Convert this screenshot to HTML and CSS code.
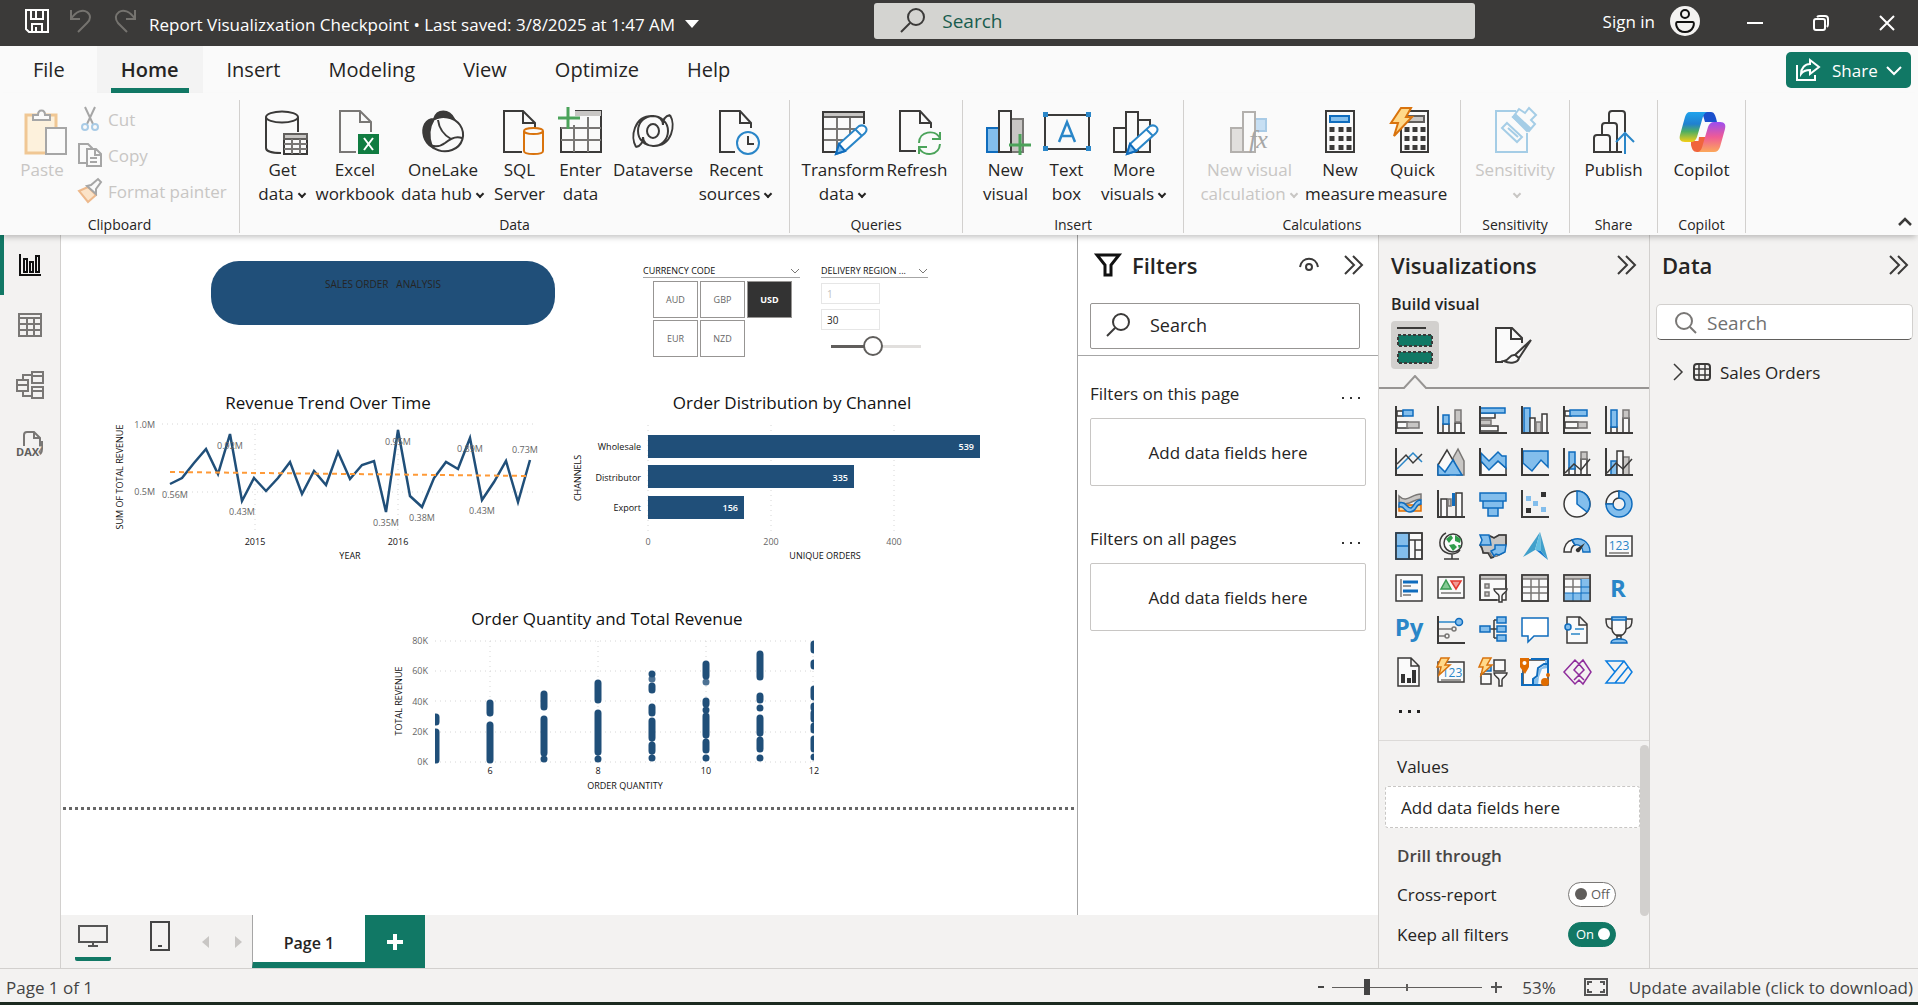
FILE: index.html
```html
<!DOCTYPE html>
<html lang="en">
<head>
<meta charset="utf-8">
<title>Report Visualizxation Checkpoint</title>
<link rel="stylesheet" href="styles.css">
</head>
<body>
<div class="app">

<header class="titlebar">
  <div class="title-left">
    <button class="plain" aria-label="Save"><svg class="ic light" width="24" height="24" viewBox="0 0 24 24"><path d="M1 1h22v22H4l-3-3zM6 1v9h12V1M11 1v9M7 23v-8h10v8M11 18v5"/></svg></button>
    <button class="plain" aria-label="Undo"><svg class="ic dim" width="24" height="24" viewBox="0 0 24 24"><path d="M2 1v9h9M2 10C7 2 14 0 18 3c4 3 4 7 0 11l-9 9"/></svg></button>
    <button class="plain" aria-label="Redo"><svg class="ic dim" width="24" height="24" viewBox="0 0 24 24"><path d="M22 1v9h-9M22 10C17 2 10 0 6 3c-4 3-4 7-1 11l9 9"/></svg></button>
  </div>
  <button class="plain doc-title">Report Visualizxation Checkpoint • Last saved: 3/8/2025 at 1:47 AM<svg width="14" height="8" viewBox="0 0 14 8"><path d="M0 0h14L7 8z" fill="#fff"/></svg></button>
  <label class="global-search">
    <svg class="ic" width="26" height="26" viewBox="0 0 26 26"><circle cx="16" cy="9" r="8"/><path d="M10 15L1 24"/></svg>
    <input type="text" placeholder="Search" aria-label="Search">
  </label>
  <div class="title-right">
    <button class="plain signin">Sign in<svg width="30" height="30" viewBox="0 0 30 30"><circle cx="15" cy="15" r="15" fill="#f3f2f1"/><g fill="none" stroke="#111" stroke-width="2"><circle cx="15" cy="8" r="4"/><path d="M7 16h16c2 0 1 10-8 10S5 16 7 16z"/></g></svg></button>
    <button class="plain" aria-label="Minimize"><svg class="ic light" width="16" height="16" viewBox="0 0 16 16"><path d="M0 8h16"/></svg></button>
    <button class="plain" aria-label="Restore"><svg class="ic light" width="16" height="16" viewBox="0 0 16 16"><rect x="1" y="4" width="11" height="11" rx="2"/><path d="M4 2q1-1 3-1h5q3 0 3 3v5q0 2-1 3"/></svg></button>
    <button class="plain" aria-label="Close"><svg class="ic light" width="16" height="16" viewBox="0 0 16 16"><path d="M1 1l14 14M15 1L1 15"/></svg></button>
  </div>
</header>

<nav class="menubar">
  <a class="menu file" href="#">File</a>
  <a class="menu active" href="#">Home</a>
  <a class="menu" href="#">Insert</a>
  <a class="menu" href="#">Modeling</a>
  <a class="menu" href="#">View</a>
  <a class="menu" href="#">Optimize</a>
  <a class="menu" href="#">Help</a>
  <button class="share"><svg class="ic light" width="24" height="22" viewBox="0 0 24 22"><path d="M1 6v15h18v-5"/><path d="M14 1l9 7-9 7v-4c-4 0-7 1-9 4 0-6 4-10 9-10z"/></svg>Share<svg class="ic light" width="16" height="9" viewBox="0 0 16 9"><path d="M1 1l7 7 7-7"/></svg></button>
</nav>

<section class="ribbon">
  <div class="group clipboard">
    <div class="tools">
      <button class="tool w-paste off" disabled><svg class="ic" width="48" height="48" viewBox="-3 0 48 48"><path class="tan" d="M5 8h30v38H5z"/><path class="fillw" stroke="#a6a6a6" d="M12 13V8h5c0-6 7-6 7 0h5v5z"/><path class="fillw" stroke="#a6a6a6" d="M25 21h20v26H25z"/></svg><span>Paste</span></button>
      <div class="stack">
        <button class="mini" disabled><svg class="ic" width="24" height="24" viewBox="0 0 24 24"><path stroke="#a6a6a6" d="M7 0l8 17M17 0L9 17"/><g stroke="#a9cbe6"><circle cx="7" cy="20" r="3"/><circle cx="17" cy="20" r="3"/></g></svg>Cut</button>
        <button class="mini" disabled><svg class="ic" width="24" height="24" viewBox="0 0 24 24"><path stroke="#a6a6a6" d="M9 20H1V1h9l4 4v1M9 6h9l5 5v12H9zM17 6v6h6M12 15h7M12 19h7"/></svg>Copy</button>
        <button class="mini" disabled><svg class="ic" width="24" height="24" viewBox="0 0 24 24"><path fill="#fbe3c8" stroke="#edb98c" d="M1 12l9-4 8 8-8 7z"/><path class="fillw" stroke="#a6a6a6" d="M9 7l4-1 7-6 3 3-5 7v5z"/></svg>Format painter</button>
      </div>
    </div>
    <h2>Clipboard</h2>
  </div>
  <div class="group">
    <div class="tools pad">
      <button class="tool w61"><svg class="ic" width="48" height="48" viewBox="-1 0 48 48"><path class="fillw" d="M6 9v32c0 4 8 6 15 6V30h18V9z" stroke="none"/><ellipse class="fillw" cx="22" cy="10" rx="16" ry="5.500"/><path d="M6 10v31c0 3 6 5 15 5M38 10v15"/><path class="fillw" d="M24 27h23v20H24z"/><path class="grayf" d="M24 27h23v5H24z"/><path class="gy" d="M24 37h23M24 42h23M32 32v15M40 32v15"/></svg><span>Get<br>data<i></i></span></button>
      <button class="tool w84"><svg class="ic" width="48" height="48" viewBox="-3 0 48 48"><path class="gy fillw" d="M22 45H6V4h20l11 11v10"/><path class="gy" d="M26 4v11h11"/><path d="M24 27h21v20H24z" fill="#107c41" stroke="none"/><path d="M30 31l9 12M39 31l-9 12" stroke="#fff"/></svg><span>Excel<br>workbook</span></button>
      <button class="tool w92"><svg class="ic" width="48" height="48" viewBox="0 0 48 48"><path d="M15 12C10 20 9 30 13 40 5 35 2 25 6 17c2-3 5-5 9-5zM15 12C18 2 30 2 35 12c-7-3-13-3-20 0z" fill="#3b3a39"/><path d="M15 12c9-4 20-2 26 6 6 9 3 21-8 25-8 3-14 1-20-3M8 35c5 6 13 5 18 1 7-6 12-7 17-5M19 13c1 8 6 15 13 19"/></svg><span>OneLake<br>data hub<i></i></span></button>
      <button class="tool w61"><svg class="ic" width="48" height="48" viewBox="0 0 48 48"><path class="fillw" d="M26 45H8V4h19l12 12v5M27 4v12h12"/><path d="M28 24v20c0 4 19 4 19 0V24" stroke="#d9730d" fill="#fafafa"/><ellipse cx="37.500" cy="24" rx="9.500" ry="3" stroke="#d9730d" fill="#fafafa"/></svg><span>SQL<br>Server</span></button>
      <button class="tool w61"><svg class="ic" width="48" height="48" viewBox="0 0 48 48"><path class="fillw" d="M4 20v25h40V4H18"/><path d="M18 4h26v5H18z" fill="#c8c6c4" stroke="none"/><path class="gy" d="M4 21h40M4 33h40M17 18v27M31 10v35"/><path d="M1 11h22M11 0v22" stroke="#4ba35a" stroke-width="3"/></svg><span>Enter<br>data</span></button>
      <button class="tool w84"><svg class="ic" width="48" height="48" viewBox="0 0 48 48"><path d="M7 40C1 30 5 9 23 9c9 0 16 6 16 15s-7 15-15 15c-6 0-10-4-10-9M41 8c6 10 2 31-16 31-9 0-16-6-16-15S16 9 24 9c6 0 10 4 10 9M7 40c5-1 7-5 7-10M41 8c-5 1-7 5-7 10"/><ellipse cx="24" cy="24" rx="6" ry="7"/></svg><span>Dataverse</span></button>
      <button class="tool w82"><svg class="ic" width="48" height="48" viewBox="0 0 48 48"><path class="fillw" d="M23 45H8V4h20l11 12v5M28 4v12h11"/><circle cx="36" cy="36" r="11" stroke="#2a86c8" fill="#fafafa"/><path d="M36 29v8h6"/></svg><span>Recent<br>sources<i></i></span></button>
    </div>
    <h2>Data</h2>
  </div>
  <div class="group">
    <div class="tools pad">
      <button class="tool w82"><svg class="ic" width="48" height="48" viewBox="0 0 48 48"><path class="fillw" d="M4 5h41v40H4z" stroke="none"/><path class="grayf" d="M4 5h41v5H4z"/><path class="gy" d="M4 22h38M4 33h26M18 11v34M31 11v20"/><path d="M18 45H4V5h41v12"/><path class="pen" d="M17 47l3-10 20-18c5-2 10 2 6 7L26 44zM36 22l7 7"/><path class="bluef" d="M17 47l3-10 6 7z"/></svg><span>Transform<br>data<i></i></span></button>
      <button class="tool w66"><svg class="ic" width="48" height="48" viewBox="-1 0 48 48"><path class="fillw" d="M22 44H6V4h20l11 12v5M26 4v12h11"/><path d="M25 36c0-12 16-14 21-5M46 25v7h-8M46 37c-1 12-16 13-21 4M25 47v-7h8" stroke="#4ba35a"/></svg><span>Refresh</span></button>
    </div>
    <h2>Queries</h2>
  </div>
  <div class="group">
    <div class="tools pad">
      <button class="tool w61"><svg class="ic" width="48" height="48" viewBox="0 0 48 48"><path class="bluef" d="M5 21h12v24H5z"/><path class="gy" fill="#c8c6c4" d="M29 12h12v33H29z"/><path class="fillw" d="M17 4h12v41H17z"/><path d="M27 38h22M38 27v21" stroke="#4ba35a" stroke-width="3"/></svg><span>New<br>visual</span></button>
      <button class="tool w61"><svg class="ic" width="48" height="48" viewBox="0 0 48 48"><path class="fillw" d="M2 8h44v34H2z"/><path d="M0 5h5v5H0zM43 5h5v5h-5zM0 39h5v5H0zM43 39h5v5h-5z" fill="#2a86c8" stroke="none"/><path d="M16 35l8-20 8 20M18 29h12" stroke="#2a86c8" stroke-width="2.500"/></svg><span>Text<br>box</span></button>
      <button class="tool w74"><svg class="ic" width="48" height="48" viewBox="0 0 48 48"><path class="fillw" d="M4 21h12v24H4zM28 13h12v32H28zM16 5h12v40H16z"/><path class="pen" d="M17 47l3-10 20-18c5-2 10 2 6 7L26 44zM36 22l7 7"/><path class="bluef" d="M17 47l3-10 6 7z"/></svg><span>More<br>visuals<i></i></span></button>
    </div>
    <h2>Insert</h2>
  </div>
  <div class="group">
    <div class="tools pad">
      <button class="tool w107 off" disabled><svg class="ic" width="48" height="48" viewBox="0 0 48 48"><g stroke="#b3b0ad"><path fill="#e1dfdd" d="M5 21h12v24H5z"/><path fill="#c7dff3" stroke="#a9cbe6" d="M29 12h11v12H29z"/><path class="fillw" d="M17 5h12v40H17z"/></g><text x="23" y="41" class="fx">fx</text></svg><span>New visual<br>calculation<i></i></span></button>
      <button class="tool w74"><svg class="ic" width="48" height="48" viewBox="0 0 48 48"><path class="fillw" d="M10 4h28v41H10z"/><path class="bluef" d="M14 9h19v6H14z"/><path d="M16 20v24M25 20v24M33 20v24" stroke-width="5" stroke-dasharray="5 4"/></svg><span>New<br>measure</span></button>
      <button class="tool w71"><svg class="ic" width="48" height="48" viewBox="0 0 48 48"><path class="fillw" d="M12 4h27v41H12z"/><path class="grayf" d="M16 9h19v6H16z"/><path d="M18 20v24M26 20v24M34 20v24" stroke-width="5" stroke-dasharray="5 4"/><path class="bolt" d="M12 1h10l-5 9h6L5 29l4-13H2z"/></svg><span>Quick<br>measure</span></button>
    </div>
    <h2>Calculations</h2>
  </div>
  <div class="group">
    <div class="tools pad">
      <button class="tool w84 off" disabled><svg class="ic" width="48" height="48" viewBox="0 0 48 48"><g stroke="#a5cde6"><path d="M36 26v19H5V4h20"/><path class="fillw" d="M16 16l15 14-5 5-15-14z"/><path d="M17 21l10 9"/><path class="fillw" d="M22 10l6-8 6 4 4-5 7 7-5 5 4 4-6 7z"/><path fill="#a5cde6" d="M22 10l3-2 14 13-3 3z"/></g></svg><span>Sensitivity<br><i></i></span></button>
    </div>
    <h2>Sensitivity</h2>
  </div>
  <div class="group">
    <div class="tools">
      <button class="tool w87"><svg class="ic" width="48" height="48" viewBox="0 0 48 48"><path class="fillw" d="M19 16V7q0-3 3-3h10q3 0 3 3v18M12 28V19q0-3 3-3h9q3 0 3 3v26M4 45V31q0-3 3-3h10q3 0 3 3v14zM20 45h12"/><path d="M35 47V26M26 35l9-9 9 9" stroke="#2a86c8"/></svg><span>Publish</span></button>
    </div>
    <h2>Share</h2>
  </div>
  <div class="group">
    <div class="tools">
      <button class="tool w87"><svg width="48" height="48" viewBox="0 0 48 48"><defs><linearGradient id="cp1" x1="0" y1="0" x2="0" y2="1"><stop offset="0" stop-color="#1fa3ec"/><stop offset=".4" stop-color="#2080d0"/><stop offset=".65" stop-color="#4fae62"/><stop offset="1" stop-color="#f5cf15"/></linearGradient><linearGradient id="cp2" x1="0" y1="0" x2="0" y2="1"><stop offset="0" stop-color="#9b4df0"/><stop offset=".5" stop-color="#ef5b96"/><stop offset="1" stop-color="#fca85a"/></linearGradient></defs><path d="M24 5h9c3 0 4 3 5 6l1 4H27z" fill="#1b50cc"/><path d="M13 34l8 0-2 11c-4 0-5-3-6-7z M21 30h12l-5 15h-9z" fill="#f0653c"/><path d="M12 5h17c-3 1-4 4-5 8l-5 17c-1 3-3 5-6 5H7c-5 0-6-3-5-7l5-18c1-3 2-5 5-5z" fill="url(#cp1)"/><path d="M36 45H20c3-1 4-4 5-8l5-17c1-3 3-5 6-5h6c5 0 6 3 5 7l-5 18c-1 3-3 5-6 5z" fill="url(#cp2)"/></svg><span>Copilot</span></button>
    </div>
    <h2>Copilot</h2>
  </div>
  <button class="plain collapse" aria-label="Collapse ribbon"><svg class="ic" width="14" height="9" viewBox="0 0 14 9"><path d="M1 8l6-6 6 6" stroke-width="2.500"/></svg></button>
</section>

<main class="work">
  <nav class="rail">
    <a class="here" href="#" aria-label="Report view"><svg class="ic" width="24" height="24" viewBox="0 0 24 24"><path stroke="#111" d="M2 1v21h21M6 6h3v13H6zM12 9h3v10h-3zM18 3h3v16h-3z"/></svg></a>
    <a href="#" aria-label="Table view"><svg class="ic gr" width="24" height="24" viewBox="0 0 24 24"><path d="M1 1h22v22H1zM1 5h22M1 11h22M1 17h22M9 5v18M16 5v18"/></svg></a>
    <a href="#" aria-label="Model view"><svg class="ic gr" width="28" height="28" viewBox="0 0 28 28"><path d="M1 9h11v11H1zM1 14h11M16 1h11v11H16zM16 5h11M16 16h11v11H16zM16 20h11M7 9V4h9M7 20v5h9"/></svg></a>
    <a href="#" aria-label="DAX query view"><svg class="ic gr" width="28" height="28" viewBox="0 0 28 28"><path d="M8 15V4q0-3 3-3h7l6 6v10q0 4-3 6M18 1v6h6M26 10v8q0 6-6 7"/><text x="0" y="25" class="dax">DAX</text></svg></a>
  </nav>

  <div class="center">
    <div class="report">
      <div class="visuals">
        <div class="banner">SALES ORDER &nbsp;&nbsp;ANALYSIS</div>
        <div class="slicer currency">
          <h3>CURRENCY CODE<svg class="ic gr" width="8" height="5" viewBox="0 0 8 5"><path d="M0 0l4 4 4-4" stroke-width="1"/></svg></h3>
          <div class="tiles"><button>AUD</button><button>GBP</button><button class="picked">USD</button><button>EUR</button><button>NZD</button></div>
        </div>
        <div class="slicer region">
          <h3>DELIVERY REGION ...<svg class="ic gr" width="8" height="5" viewBox="0 0 8 5"><path d="M0 0l4 4 4-4" stroke-width="1"/></svg></h3>
          <input type="text" value="1" aria-label="Minimum region" disabled>
          <input type="text" value="30" aria-label="Maximum region">
          <input type="range" class="knob" min="0" max="100" value="46" aria-label="Delivery region">
        </div>
      </div>
      <div class="charts">
        <figure class="trend">
          <figcaption>Revenue Trend Over Time</figcaption>
          <svg class="chart" width="446" height="150" viewBox="105 416 446 150">
            <path class="grid" d="M162 424H536M162 492H536M255 424V533M398 424V533"/>
            <g class="ax end"><text x="155" y="428">1.0M</text><text x="155" y="495">0.5M</text></g>
            <polyline class="series" points="170,484 182,478 194,463 206,449 218,474 230,434 242,501 254,478 266,491 278,478 290,462 302,494 314,471 326,485 338,452 350,479 362,465 374,461 386,512 398,430 410,496 422,507 434,478 446,462 458,469 470,438 482,500 494,482 506,461 518,502 530,460"/>
            <path d="M170 472L530 476" class="fit"/>
            <g class="ax mid"><text x="175" y="498">0.56M</text><text x="230" y="449">0.92M</text><text x="242" y="515">0.43M</text><text x="386" y="526">0.35M</text><text x="398" y="445">0.95M</text><text x="422" y="521">0.38M</text><text x="470" y="452">0.89M</text><text x="482" y="514">0.43M</text><text x="525" y="453">0.73M</text></g>
            <g class="ax mid dark"><text x="255" y="545">2015</text><text x="398" y="545">2016</text><text class="name" x="350" y="559">YEAR</text><text class="name" transform="translate(123 477) rotate(-90)">SUM OF TOTAL REVENUE</text></g>
          </svg>
        </figure>
        <figure class="channel">
          <figcaption>Order Distribution by Channel</figcaption>
          <svg class="chart" width="450" height="150" viewBox="567 416 450 150">
            <path class="grid" d="M648 425V533M771 425V533M894 425V533"/>
            <path class="bars" d="M648 435h332v23H648zM648 465h206v23H648zM648 496h96v23H648z"/>
            <g class="ax end dark"><text x="641" y="450">Wholesale</text><text x="641" y="481">Distributor</text><text x="641" y="511">Export</text></g>
            <g class="ax end inv"><text x="974" y="450">539</text><text x="848" y="481">335</text><text x="738" y="511">156</text></g>
            <g class="ax mid"><text x="648" y="545">0</text><text x="771" y="545">200</text><text x="894" y="545">400</text></g>
            <g class="ax mid dark"><text class="name" x="825" y="559">UNIQUE ORDERS</text><text class="name" transform="translate(581 478) rotate(-90)">CHANNELS</text></g>
          </svg>
        </figure>
      </div>
      <div class="charts lower">
        <figure class="quantity">
          <figcaption>Order Quantity and Total Revenue</figcaption>
          <svg class="chart" width="440" height="160" viewBox="387 631 440 160">
            <clipPath id="plot"><path d="M435 636h379v130H435z"/></clipPath>
            <path class="grid" d="M435 640H814M435 670H814M435 700H814M435 731H814M435 761H814M490 640V761M598 640V761M706 640V761M813 640V761"/>
            <g clip-path="url(#plot)" class="dots">
              <path d="M436 716V721M436 731V759M490 702V712M490 724V759M544 693V706M544 718V752M544 758v0M598 682V699M598 712V751M598 758v0M652 673v0M652 685V689M652 706V712M652 720V737M652 744V750M652 757v0M706 663V675M706 700V703M706 709v0M706 715V734M706 741V749M706 757v0M760 653V676M760 695V699M760 707v0M760 717V732M760 739V748M760 757v0M814 643V649M814 662V665M814 688V696M814 705V707M814 712V718M814 725V729M814 738V748M814 756v0"/>
              <path d="M652 678v0M706 681v0" opacity=".8"/>
            </g>
            <g class="ax end"><text x="428" y="643">80K</text><text x="428" y="673">60K</text><text x="428" y="704">40K</text><text x="428" y="734">20K</text><text x="428" y="764">0K</text></g>
            <g class="ax mid dark"><text x="490" y="773">6</text><text x="598" y="773">8</text><text x="706" y="773">10</text><text x="814" y="773">12</text><text class="name" x="625" y="788">ORDER QUANTITY</text><text class="name" transform="translate(402 700) rotate(-90)">TOTAL REVENUE</text></g>
          </svg>
        </figure>
      </div>
      <div class="page-end"></div>
    </div>

    <aside class="filters">
      <header>
        <svg class="ic" width="26" height="24" viewBox="0 0 26 24"><path stroke="#111" stroke-width="3" d="M2 2h22l-8 10v10h-6V12z"/></svg>
        <h2>Filters</h2>
        <button class="plain" aria-label="Show filter pane"><svg class="ic" width="20" height="14" viewBox="0 0 20 14"><path d="M1 9C3-2 17-2 19 9"/><circle cx="10" cy="9" r="3"/></svg></button>
        <button class="plain" aria-label="Collapse filters"><svg class="ic" width="20" height="20" viewBox="0 0 20 20"><path d="M1 1l9 9-9 9M9 1l9 9-9 9"/></svg></button>
      </header>
      <label class="find"><svg class="ic" width="24" height="24" viewBox="0 0 24 24"><circle cx="15" cy="9" r="8"/><path d="M9 15l-8 8"/></svg><input type="text" placeholder="Search" aria-label="Search filters"></label>
      <hr>
      <h3>Filters on this page<button class="plain dots3" aria-label="More options for this page"><svg width="18" height="2" viewBox="0 0 18 2"><path d="M0 0h2v2H0zM8 0h2v2H8zM16 0h2v2h-2z" fill="#333"/></svg></button></h3>
      <button class="well">Add data fields here</button>
      <h3>Filters on all pages<button class="plain dots3" aria-label="More options for all pages"><svg width="18" height="2" viewBox="0 0 18 2"><path d="M0 0h2v2H0zM8 0h2v2H8zM16 0h2v2h-2z" fill="#333"/></svg></button></h3>
      <button class="well">Add data fields here</button>
    </aside>

    <footer class="pages">
      <button class="plain layout on" aria-label="Desktop layout"><svg class="ic" width="30" height="22" viewBox="0 0 30 22"><path stroke="#555" d="M1 1h28v16H1zM15 17v4M10 21h10"/></svg></button>
      <button class="plain layout" aria-label="Mobile layout"><svg class="ic" width="20" height="30" viewBox="0 0 20 30"><path stroke="#444" d="M1 1h18v28H1zM8 25h4"/></svg></button>
      <button class="plain arrow" aria-label="Previous page"><svg width="7" height="12" viewBox="0 0 7 12"><path d="M7 0v12L0 6z" fill="#c8c6c4"/></svg></button>
      <button class="plain arrow" aria-label="Next page"><svg width="7" height="12" viewBox="0 0 7 12"><path d="M0 0v12l7-6z" fill="#c8c6c4"/></svg></button>
      <button class="page-tab">Page 1</button>
      <button class="add-page" aria-label="New page"><svg width="16" height="16" viewBox="0 0 16 16"><path d="M8 0v16M0 8h16" stroke="#fff" stroke-width="4"/></svg></button>
    </footer>
  </div>

  <aside class="viz-pane">
    <header><h2>Visualizations</h2><button class="plain" aria-label="Collapse visualizations"><svg class="ic" width="20" height="20" viewBox="0 0 20 20"><path d="M1 1l9 9-9 9M9 1l9 9-9 9"/></svg></button></header>
    <h3>Build visual</h3>
    <div class="modes">
      <button class="mode on" aria-label="Build visual"><svg class="ic" width="36" height="38" viewBox="0 0 36 38"><path d="M0 2h29"/><path fill="#117865" stroke-dasharray="3 2" d="M1 9h34v11H1zM1 26h34v11H1z"/></svg></button>
      <button class="mode" aria-label="Format visual"><svg class="ic" width="38" height="38" viewBox="0 0 38 38"><path class="fillw" stroke="none" d="M2 2h16l9 10v24H2z"/><path d="M9 36H2V2h16l10 10v5M17 2v11h10M37 14L21 29l4 3zM21 29c-6-1-5 5-11 6 6 3 14 2 15-3z"/></svg></button>
    </div>
    <svg class="notch" width="270" height="14" viewBox="0 0 270 14"><path d="M0 13h25l11-12 11 12h223" fill="none" stroke="#979593" stroke-width="2"/></svg>
    <div class="gallery">
      <button aria-label="Stacked bar chart"><svg class="vi" viewBox="0 0 28 28"><path class="w" d="M2 5h6v5H2zM2 16h11v6H2z"/><path class="b" d="M8 4h10v6H8z"/><path class="g" d="M12 16h12v6H12z"/><path class="a" d="M1 0v27h27"/></svg></button>
      <button aria-label="Stacked column chart"><svg class="vi" viewBox="0 0 28 28"><path class="w" d="M6 18h6v9H6zM18 17h6v10h-6z"/><path class="b" d="M6 9h6v9H6z"/><path class="g" d="M18 4h6v12h-6z"/><path class="a" d="M1 0v27h27"/></svg></button>
      <button aria-label="Clustered bar chart"><svg class="vi" viewBox="0 0 28 28"><path class="w" d="M1 7h15v5H1zM1 20h18v5H1z"/><path class="g" d="M1 14h11v5H1z"/><path class="b" d="M1 2h25v5H1z"/><path class="a" d="M1 0v27h27"/></svg></button>
      <button aria-label="Clustered column chart"><svg class="vi" viewBox="0 0 28 28"><path class="b" d="M3 2h6v25H3z"/><path class="w" d="M9 12h5v15H9zM21 8h5v19h-5z"/><path class="g" d="M15 16h5v11h-5z"/><path class="a" d="M1 0v27h27"/></svg></button>
      <button aria-label="100% stacked bar chart"><svg class="vi" viewBox="0 0 28 28"><path class="w" d="M2 5h6v5H2zM2 16h13v6H2z"/><path class="b" d="M7 4h17v6H7z"/><path class="g" d="M15 16h9v6h-9z"/><path class="a" d="M1 0v27h27"/></svg></button>
      <button aria-label="100% stacked column chart"><svg class="vi" viewBox="0 0 28 28"><path class="w" d="M6 21h6v6H6zM18 12h6v15h-6z"/><path class="b" d="M6 4h6v17H6z"/><path class="g" d="M18 4h6v8h-6z"/><path class="a" d="M1 0v27h27"/></svg></button>

      <button aria-label="Line chart"><svg class="vi" viewBox="0 0 28 28"><path class="bl" d="M2 21L18 5l9 9"/><path class="l" d="M2 16l9-9 7 8 9-9"/><path class="a" d="M1 0v27h27"/></svg></button>
      <button aria-label="Area chart"><svg class="vi" viewBox="0 0 28 28"><path class="g" d="M16 10l5-9 6 12v14h-7z"/><path class="w" d="M1 27V17L10 2l8 14-6 11z"/><path class="b" d="M1 27V17l7 7 8-12 9 15z"/></svg></button>
      <button aria-label="Stacked area chart"><svg class="vi" viewBox="0 0 28 28"><path class="w" stroke="none" d="M2 13l8 8 9-8 8 7v7H2z"/><path class="b" d="M2 5l8 8 9-9 4 4h4v12l-8-7-9 9-8-9z"/><path class="a" d="M1 0v27h27"/></svg></button>
      <button aria-label="100% stacked area chart"><svg class="vi" viewBox="0 0 28 28"><path class="b" d="M2 3h25v16l-7-7-9 11-9-8z"/><path class="a" d="M1 0v27h27"/></svg></button>
      <button aria-label="Line and stacked column chart"><svg class="vi" viewBox="0 0 28 28"><path class="w" d="M6 20h6v7H6zM18 11h6v16h-6z"/><path class="b" d="M6 4h6v17H6z"/><path class="g" d="M18 4h6v7h-6z"/><path class="l" d="M2 25l9-9 7 6 9-11"/><path class="a" d="M1 0v27h27"/></svg></button>
      <button aria-label="Line and clustered column chart"><svg class="vi" viewBox="0 0 28 28"><path class="b" d="M6 13h6v14H6z"/><path class="g" d="M18 9h6v18h-6z"/><path class="w" d="M12 3h6v24h-6z"/><path class="l" d="M2 25l9-10 7 6 9-10"/><path class="a" d="M1 0v27h27"/></svg></button>

      <button aria-label="Ribbon chart"><svg class="vi" viewBox="0 0 28 28"><path class="o" d="M4 15h22v6H4z"/><path class="g" d="M4 6c8 8 12-2 22-2v5C17 9 15 17 4 12z"/><path class="b" d="M4 13c7-3 8 6 12 5 4-2 3-8 10-8v4c-6 0-4 8-11 8S10 15 4 17z"/><path class="a" d="M1 0v27h27"/></svg></button>
      <button aria-label="Waterfall chart"><svg class="vi" viewBox="0 0 28 28"><path class="w" d="M4 9h6v18H4zM19 3h6v24h-6z"/><path class="g" d="M11 9h3v7h-3z"/><path fill="#0f6cbd" d="M15 3h3v13h-3z"/><path class="a" d="M1 0v27h27"/></svg></button>
      <button aria-label="Funnel"><svg class="vi" viewBox="0 0 28 28"><path class="b" d="M1 3h26v8H1zM4 11h20v7H4zM9 18h10v8H9z"/></svg></button>
      <button aria-label="Scatter chart"><svg class="vi" viewBox="0 0 28 28"><path fill="#83beec" d="M5 6h5v5H5zM12 11h5v5h-5zM20 17h5v5h-5z"/><path fill="#333" d="M20 2h5v5h-5zM5 18h5v5H5z"/><path class="a" d="M1 0v27h27"/></svg></button>
      <button aria-label="Pie chart"><svg class="vi" viewBox="0 0 28 28"><circle class="w" cx="14" cy="14" r="13"/><path class="b" d="M14 14V1a13 13 0 0 1 10 21z"/></svg></button>
      <button aria-label="Donut chart"><svg class="vi" viewBox="0 0 28 28"><path class="w" d="M14 1A13 13 0 0 0 1 14h7a6 6 0 0 1 6-6z"/><path class="b" d="M14 1a13 13 0 1 1-13 13h7a6 6 0 1 0 6-6z"/></svg></button>

      <button aria-label="Treemap"><svg class="vi" viewBox="0 0 28 28"><path class="w" d="M1 1h26v26H1z"/><path class="b" d="M1 1h13v26H1zM1 14h13"/><path class="l" d="M14 8h13M14 1v26M20 8v19M20 18h7M1 1h26v26H1z"/></svg></button>
      <button aria-label="Map"><svg class="vi" viewBox="0 0 28 28"><circle class="w" cx="16" cy="11" r="9"/><path fill="#2f9c4a" d="M9 7l5-4 2 3-4 5zM18 3l6 4-1 4-5-2zM12 13l5-1 3 3-4 4zM21 13h3l-2 4z"/><path class="l" d="M9 1C1 5 1 16 8 20s13 1 15-2M15 22v5M7 27h15"/></svg></button>
      <button aria-label="Filled map"><svg class="vi" viewBox="0 0 28 28"><path class="g" d="M11 4l4 2 5-3h7v10l-3 8-6 3-5 1-2-4H5l-4-8z"/><path class="l" d="M1 13l2 3 1 5h5l3 5 3-1M11 4l4 2 5-3h7v10"/><path class="b" d="M1 3h9l1 4 1 6H1l2-5zM16 13h11l-1 7-6 3-3-1-2 2-3-5 4-2z"/></svg></button>
      <button aria-label="Azure map"><svg class="vi" viewBox="0 0 28 28"><path fill="#40a0cb" d="M19 0L2 25l12-7z"/><path fill="#62bfe2" d="M19 0l1 19-6-1z"/><path fill="#1278d0" d="M20 19l-5-1 12 10z"/><path fill="#40a0cb" d="M19 0l8 28-7-9z"/></svg></button>
      <button aria-label="Gauge"><svg class="vi" viewBox="0 0 28 28"><path class="w" d="M1 20C1 14 4 9 9 8l3 5c-3 1-4 3-4 7z"/><path class="b" d="M9 8c9-4 18 2 18 12h-7c0-5-4-8-8-7z"/><path fill="#333" d="M22 11l-5 8a2 2 0 1 1-4-2z"/></svg></button>
      <button aria-label="Card"><svg class="vi" viewBox="0 0 28 28"><path class="w" d="M1 4h26v20H1z"/><text x="14" y="18" class="num">123</text><path class="gl" d="M4 21h20"/></svg></button>

      <button aria-label="Multi-row card"><svg class="vi" viewBox="0 0 28 28"><path class="w" d="M1 1h26v26H1z"/><path class="gl" d="M6 5v18M8 12h8M8 21h8"/><path stroke="#0f6cbd" stroke-width="3" d="M8 8h15M8 17h15"/></svg></button>
      <button aria-label="KPI"><svg class="vi" viewBox="0 0 28 28"><path class="w" d="M1 3h26v21H1z"/><path d="M9 6l5 9H4z" fill="#86c995" stroke="#3a9b52" stroke-width="1.500"/><path d="M19 15l5-8H14z" fill="#f29c96" stroke="#e23a31" stroke-width="1.500"/><path class="gl" d="M4 19h20"/></svg></button>
      <button aria-label="Slicer"><svg class="vi" viewBox="0 0 28 28"><path class="w" d="M1 1h26v25H1z"/><path class="g" d="M1 1h26v4H1zM6 10h4v4H6zM6 18h4v4H6z"/><path class="l" d="M1 1h26v13M1 1v25h17"/><path class="w" d="M15 15h13c0 4-5 4-5 7v6h-3v-6c0-3-5-3-5-7z"/></svg></button>
      <button aria-label="Table"><svg class="vi" viewBox="0 0 28 28"><path class="w" d="M1 1h26v26H1z"/><path class="g" d="M1 1h26v4H1z"/><path class="gl" d="M1 13h26M1 19h26M10 5v22M18 5v22"/><path class="l" d="M1 1h26v26H1z"/></svg></button>
      <button aria-label="Matrix"><svg class="vi" viewBox="0 0 28 28"><path class="w" d="M1 1h26v26H1z"/><path class="g" d="M1 1h26v4H1z"/><path fill="#83beec" d="M18 5h9v22H1v-8h17z"/><path class="gl" d="M1 13h17M10 5v14"/><path d="M1 19h26M18 5v22M10 19v8M18 13h9" stroke="#0f6cbd"/><path class="l" d="M1 1h26v26H1z"/></svg></button>
      <button aria-label="R script visual"><svg class="vi" viewBox="0 0 28 28"><text x="13" y="23" class="lang">R</text></svg></button>

      <button aria-label="Python visual"><svg class="vi" viewBox="0 0 28 28"><text x="14" y="20" class="lang">Py</text></svg></button>
      <button aria-label="Key influencers"><svg class="vi" viewBox="0 0 28 28"><path class="a" d="M1 0v27h27"/><path class="bl" d="M2 6h18"/><circle class="b" cx="22" cy="6" r="3.500"/><path class="gl" d="M2 13h13M2 20h7"/><circle class="gl" cx="17" cy="13" r="2"/><circle class="gl" cx="10" cy="20" r="2"/></svg></button>
      <button aria-label="Decomposition tree"><svg class="vi" viewBox="0 0 28 28"><path class="l" d="M11 13h7M15 4v18M15 4h3M15 22h3"/><path class="b" d="M1 10h10v6H1zM18 1h9v6h-9zM18 10h9v6h-9zM18 19h9v6h-9z"/></svg></button>
      <button aria-label="Q&amp;A"><svg class="vi" viewBox="0 0 28 28"><path fill="#fff" stroke="#0f6cbd" stroke-width="1.500" d="M1 2h26v18H13l-6 6v-6H1z"/></svg></button>
      <button aria-label="Narrative"><svg class="vi" viewBox="0 0 28 28"><path class="w" d="M4 1h13l7 7v19H4zM16 1v8h8"/><path class="bl" d="M12 13h9M8 18h9"/><circle class="b" cx="5" cy="11" r="3"/></svg></button>
      <button aria-label="Metrics"><svg class="vi" viewBox="0 0 28 28"><path class="w" d="M7 2h14v11c0 4-4 7-7 7s-7-3-7-7zM12 19h4v4h-4z"/><path class="l" d="M7 3H1c0 6 1 9 6 10M21 3h6c0 6-1 9-6 10"/><path class="b" d="M7 1h14v3H7zM6 27c0-3 2-4 8-4s8 1 8 4z"/></svg></button>

      <button aria-label="Paginated report"><svg class="vi" viewBox="0 0 28 28"><path class="w" d="M3 0h13l8 8v20H3zM16 0v8h8"/><path fill="#333" d="M6 16h4v9H6zM12 20h4v5h-4zM17 12h4v13h-4z"/></svg></button>
      <button aria-label="Card (new)"><svg class="vi" viewBox="0 0 28 28"><path class="w" d="M1 4h26v20H1z"/><text x="15" y="19" class="num">123</text><path class="gl" d="M4 22h20"/><path class="bolt" d="M4 0h8l-4 7h5L2 17l2-8h-4z"/></svg></button>
      <button aria-label="Slicer (new)"><svg class="vi" viewBox="0 0 28 28"><path class="w" d="M15 2h11v11H15zM2 16h10v10H2z"/><path class="b" d="M6 8h6v5H4z"/><path class="w" d="M15 15h13c0 4-5 4-5 7v6h-3v-6c0-3-5-3-5-7z"/><path class="bolt" d="M4 0h8l-4 7h5L2 17l2-8h-4z"/></svg></button>
      <button aria-label="ArcGIS maps"><svg class="vi" viewBox="0 0 28 28"><path class="w" stroke="none" d="M2 2h25v25H2z"/><path fill="#83beec" d="M27 2v8l-6 1-3 8-1 8h-5v-5l5-3 1-8 6-4V2z"/><path d="M10 1h17v17M1 15v12h18M12 26v-5l4-3 1-8 6-4h4" fill="none" stroke="#0f6cbd" stroke-width="2"/><path fill="#e06c00" d="M-1 0h9v9l-4 7-5-7z"/><circle cx="3.500" cy="5" r="2" fill="#fff"/><circle cx="24" cy="24" r="4" fill="#e06c00"/><circle cx="27" cy="17" r="2" fill="#e06c00"/></svg></button>
      <button aria-label="Power Apps"><svg class="vi" viewBox="0 0 28 28"><path class="pa" d="M12 2L1 14l11 12 4-4 4 4 8-12-8-12-4 4zM16 6l-5 6 5 5-5 5M16 6l5 6-5 5 5 5M21 12l-5-6"/></svg></button>
      <button aria-label="Power Automate"><svg class="vi" viewBox="0 0 28 28"><path class="pf" d="M1 3h18l8 11-8 11H1l9-11zM19 3L5 20M23 9L10 25"/></svg></button>
      <button aria-label="Get more visuals"><svg class="vi" viewBox="0 0 28 28"><path fill="#222" d="M4 10h3v3H4zM13 10h3v3h-3zM22 10h3v3h-3z"/></svg></button>
    </div>
    <div class="fields">
      <h4>Values</h4>
      <button class="drop">Add data fields here</button>
      <h4 class="strong">Drill through</h4>
      <label class="switch">Cross-report<input type="checkbox"><span class="pill"></span></label>
      <label class="switch">Keep all filters<input type="checkbox" checked><span class="pill"></span></label>
      <div class="thumb"></div>
    </div>
  </aside>

  <aside class="data-pane">
    <header><h2>Data</h2><button class="plain" aria-label="Collapse data"><svg class="ic" width="20" height="20" viewBox="0 0 20 20"><path d="M1 1l9 9-9 9M9 1l9 9-9 9"/></svg></button></header>
    <label class="find"><svg class="ic gr" width="22" height="22" viewBox="0 0 22 22"><circle cx="9" cy="9" r="8"/><path d="M15 15l6 6"/></svg><input type="text" placeholder="Search" aria-label="Search data"></label>
    <a class="table-row" href="#"><svg class="ic" width="10" height="18" viewBox="0 0 10 18"><path d="M1 1l8 8-8 8" stroke-width="1.500"/></svg><svg class="ic" width="18" height="18" viewBox="0 0 18 18"><rect x="1" y="1" width="16" height="16" rx="3"/><path d="M6 1v16M12 1v16M1 6h16M1 12h16" stroke-width="1.500"/></svg>Sales Orders</a>
  </aside>
</main>

<footer class="status">
  <span>Page 1 of 1</span>
  <div class="zoom">
    <button class="plain" aria-label="Zoom out"><svg width="6" height="2" viewBox="0 0 6 2"><path d="M0 0h6v2H0z" fill="#444"/></svg></button>
    <input type="range" min="0" max="100" value="22" aria-label="Zoom">
    <button class="plain" aria-label="Zoom in"><svg width="11" height="11" viewBox="0 0 11 11"><path d="M5 0v11M0 5h11" stroke="#555" stroke-width="2"/></svg></button>
    <span class="pct">53%</span>
    <button class="plain" aria-label="Fit to page"><svg class="ic" width="24" height="18" viewBox="0 0 24 18"><path stroke="#555" d="M1 1h22v16H1zM4 7V4h4M16 4h4v3M20 11v3h-4M8 14H4v-3"/></svg></button>
    <a href="#">Update available (click to download)</a>
  </div>
</footer>
</div>
</body>
</html>
```
FILE: styles.css
```css
* { box-sizing: border-box; }
body { margin: 0; font-family: "Open Sans", "Noto Sans", sans-serif; font-size: 17px; color: #252423; }
h2, h3, h4, figure, hr { margin: 0; }
h2, h3, h4 { font-weight: 400; font-size: 17px; }
button, input { font: inherit; color: inherit; }
button { border: 0; background: none; padding: 0; }
a { color: inherit; text-decoration: none; }
svg { display: block; flex: none; }

.app { min-height: 100vh; display: flex; flex-direction: column; background: #f3f2f1; border-bottom: 3px solid #1c2a20; }
.plain { display: flex; align-items: center; }

/* Icon strokes */
.ic { fill: none; stroke: #3b3a39; stroke-width: 2; overflow: visible; }
.ic.light { stroke: #fff; }
.ic.dim { stroke: #75736f; }
.ic.gr { stroke: #797775; }
.ic .gy { stroke: #797775; }
.fillw { fill: #fafafa; }
.grayf { fill: #c8c6c4; stroke: #605e5c; }
.bluef { fill: #83beec; stroke: #0f6cbd; }
.tan { fill: #fdf1dc; stroke: #f0c794; stroke-width: 3; }
.pen { fill: #fff; stroke: #2a86c8; }
.bolt { fill: #ffd98a; stroke: #d9730d; stroke-width: 2; }
.fx { font: italic 26px "Liberation Serif", serif; fill: #a6a6a6; stroke: none; }
.dax { font-size: 11px; font-weight: 700; fill: #605e5c; stroke: #f3f2f1; stroke-width: 3px; paint-order: stroke; }

/* Title bar */
.titlebar { height: 46px; background: #3b3a39; color: #fff; display: flex; align-items: center; position: relative; }
.title-left { display: flex; gap: 20px; padding: 0 12px 4px 25px; }
.doc-title { gap: 10px; padding-top: 2px; white-space: nowrap; }
.global-search { position: absolute; left: 46%; margin-left: -8px; top: 3px; width: 601px; height: 36px; border-radius: 3px; background: #d4d4d1; display: flex; align-items: center; gap: 16px; padding-left: 26px; }
.global-search input { flex: 1; border: 0; background: none; padding: 0; font-size: 19px; outline: 0; }
.global-search input::placeholder { color: #185c4e; opacity: 1; }
.title-right { margin-left: auto; display: flex; align-items: center; padding-right: 23px; }
.title-right .plain + .plain { margin-left: 50px; }
.title-right .signin + .plain { margin-left: 47px; }
.signin { gap: 15px; padding-bottom: 4px; }

/* Menu tabs */
.menubar { height: 47px; background: #fafafa; display: flex; position: relative; }
.menu { font-size: 20px; line-height: 48px; padding: 0 24px; position: relative; }
.menu.file { padding: 0 32px 0 33px; }
.menu.active { font-weight: 600; background: #f3f3f3; }
.menu.active::after { content: ""; position: absolute; left: 14px; right: 14px; bottom: 0; height: 5px; background: #117865; }
.share { margin: 6px 7px 5px auto; width: 125px; height: 36px; border-radius: 5px; background: #117865; color: #fff; display: flex; align-items: center; gap: 8px; padding-left: 10px; }
.share svg:first-child { margin-right: 4px; }

/* Ribbon */
.ribbon { height: 142px; background: #fafafa; display: flex; padding-top: 7px; position: relative; z-index: 2; box-shadow: 0 4px 6px -2px rgba(0, 0, 0, .25); }
.group { height: 133px; border-right: 1px solid #d2d0ce; display: flex; flex-direction: column; }
.group h2 { margin-top: auto; font-size: 14px; line-height: 16px; text-align: center; }
.tools { display: flex; padding-top: 7px; }
.pad { padding-left: 12px; padding-right: 12px; }
.clipboard { width: 240px; }
.tool { display: flex; flex-direction: column; align-items: center; justify-content: flex-start; white-space: nowrap; line-height: 24px; }
.tool span { margin-top: 3px; }
.tool i { display: inline-block; width: 6px; height: 6px; margin: 0 2px 3px 5px; border: solid currentColor; border-width: 0 2px 2px 0; transform: rotate(45deg); }
.off, .mini { color: #c8c6c4; }
.w-paste { width: 56px; margin-left: 14px; }
.w61 { width: 61px; } .w66 { width: 66px; } .w71 { width: 71px; } .w74 { width: 74px; }
.w82 { width: 82px; } .w84 { width: 84px; } .w87 { width: 87px; }
.w92 { width: 92px; } .w107 { width: 107px; }
.stack { padding-left: 8px; margin-top: -6px; }
.mini { display: flex; align-items: center; gap: 6px; height: 36px; }
.collapse { margin: 117px 6px 0 auto; align-self: flex-start; }

/* Work area */
.work { flex: 1; display: grid; grid-template-columns: 61px 1fr 271px 269px; }
.rail { border-right: 1px solid #d2d0ce; }
.rail a { height: 60px; display: flex; align-items: center; justify-content: center; border-left: 4px solid transparent; padding-right: 4px; }
.rail a.here { border-color: #117865; }
.center { display: grid; grid-template-columns: 1fr 301px; grid-template-rows: 1fr 53px; min-width: 0; }

/* Report canvas */
.report { background: #fff; padding-top: 26px; min-width: 0; overflow: hidden; }
.visuals { display: flex; height: 128px; align-items: flex-start; }
.banner { width: 344px; height: 64px; margin-left: 150px; border-radius: 28px; background: #204f79; font-size: 10px; line-height: 46px; text-align: center; white-space: nowrap; }
.slicer { font-size: 10px; }
.slicer h3 { height: 17px; display: flex; justify-content: space-between; align-items: center; border-bottom: 1px solid #a6a6a6; padding: 4px 1px 0 0; color: #111; white-space: nowrap; font-size: 9px; line-height: 12px; }
.currency { width: 157px; margin-left: 88px; }
.tiles { display: grid; grid-template-columns: repeat(3, 45px); grid-auto-rows: 37px; gap: 2px; padding: 3px 0 0 10px; }
.tiles button { border: 1px solid #979593; color: #666; background: #fff; font-size: 9px; }
.tiles .picked { background: #333; color: #fff; font-weight: 700; }
.region { width: 107px; margin-left: 21px; }
.region input[type=text] { display: block; width: 59px; height: 21px; margin-top: 5px; border: 1px solid #e6e6e6; padding: 0 5px; background: #fff; }
.region input[disabled] { color: #c0c0c0; }
.knob { -webkit-appearance: none; appearance: none; display: block; width: 90px; height: 20px; margin: 6px 0 0 10px; background: linear-gradient(90deg, #605e5c 50%, #e1dfdd 50%) center / 100% 3px no-repeat; }
.knob::-webkit-slider-thumb { -webkit-appearance: none; width: 20px; height: 20px; border-radius: 50%; border: 2px solid #605e5c; background: #fff; }
.charts { display: flex; gap: 16px; padding-left: 44px; height: 212px; }
.lower { padding-left: 326px; height: 206px; }
.charts figcaption { line-height: 27px; text-align: center; color: #111; }
.trend { width: 446px; } .channel { width: 450px; } .quantity { width: 440px; padding-top: 4px; }
.chart { overflow: visible; }
.grid { fill: none; stroke: #d6d6d6; stroke-dasharray: 1 4; }
.series { fill: none; stroke: #204f79; stroke-width: 2.5; }
.fit { stroke: #fe9a38; stroke-width: 2; stroke-dasharray: 5 4; }
.bars { fill: #204f79; }
.dots path { fill: none; stroke: #204f79; stroke-width: 7; stroke-linecap: round; }
.ax { font-size: 9px; fill: #666; }
.end { text-anchor: end; } .mid { text-anchor: middle; }
.dark { fill: #111; } .inv { fill: #fff; font-weight: 600; }
.page-end { height: 3px; margin: 0 3px 0 2px; background: repeating-linear-gradient(90deg, #666 0 3px, transparent 3px 6px); }

/* Filters */
.filters { background: #fff; border-left: 1px solid #a6a6a6; padding-left: 12px; }
.filters header, .viz-pane header, .data-pane header { display: flex; align-items: center; height: 60px; }
header h2 { font-size: 22px; font-weight: 600; }
.filters header { padding: 0 14px 0 5px; gap: 11px; }
.filters header h2 { flex: 1; }
.filters header button + button { margin-left: 14px; }
.find { display: flex; align-items: center; }
.find input { border: 0; background: none; outline: 0; padding: 0; width: 120px; }
.find input::placeholder { color: inherit; opacity: 1; }
.filters .find { width: 270px; height: 46px; margin-top: 8px; border: 1px solid #979593; border-radius: 2px; padding: 0 0 2px 15px; gap: 20px; }
.filters .find input { font-size: 18px; }
.filters hr { border: 0; border-top: 1px solid #a6a6a6; margin: 6px 0 22px -12px; }
.filters h3 { display: flex; justify-content: space-between; line-height: 32px; padding-right: 18px; height: 40px; }
.dots3 { height: 40px; }
.well { display: block; width: 276px; height: 68px; margin-bottom: 37px; border: 1px solid #c8c6c4; border-radius: 2px; }

/* Page tabs */
.pages { grid-column: 1 / -1; display: flex; align-items: center; }
.layout { height: 46px; width: 36px; margin-left: 14px; align-self: flex-start; justify-content: center; border-bottom: 4px solid transparent; border-radius: 2px; }
.layout.on { border-color: #117865; }
.layout + .layout { margin-left: 31px; }
.arrow { margin-left: 26px; }
.layout + .arrow { margin-left: 24px; }
.page-tab { width: 113px; height: 53px; margin-left: 10px; background: #fff; border-left: 1px solid #a6a6a6; border-bottom: 6px solid #117865; font-size: 16px; font-weight: 600; padding-top: 8px; }
.add-page { width: 60px; height: 53px; background: #117865; display: flex; align-items: center; justify-content: center; }

/* Visualizations */
.viz-pane { border-left: 1px solid #d2d0ce; display: flex; flex-direction: column; }
.viz-pane header { padding: 0 12px; }
.viz-pane header h2, .data-pane header h2 { flex: 1; }
.viz-pane h3 { line-height: 18px; font-weight: 600; font-size: 16px; padding-left: 12px; }
.modes { display: flex; gap: 50px; padding: 8px 12px 6px; }
.mode { width: 48px; height: 48px; border-radius: 4px; display: flex; align-items: center; justify-content: center; }
.mode.on { background: #d2d0ce; }
.gallery { display: grid; grid-template-columns: repeat(6, 28px); grid-auto-rows: 28px; gap: 14px; padding: 17px 0 0 16px; height: 351px; }
.vi { width: 28px; height: 28px; overflow: visible; fill: none; }
.vi .w { fill: #fafafa; stroke: #3b3a39; stroke-width: 1.5; }
.vi .g { fill: #c8c6c4; stroke: #797775; stroke-width: 1.5; }
.vi .b { fill: #83beec; stroke: #0f6cbd; stroke-width: 1.5; }
.vi .o { fill: #ffd08a; stroke: #e06c00; stroke-width: 1.5; }
.vi .a, .vi .l { stroke: #3b3a39; stroke-width: 2; }
.vi .l { stroke-width: 1.5; }
.vi .bl { stroke: #2a86c8; stroke-width: 1.5; }
.vi .gl { stroke: #797775; stroke-width: 1.5; }
.vi .pa { stroke: #8f2d9c; stroke-width: 1.5; }
.vi .pf { stroke: #0b7de0; stroke-width: 1.5; }
.vi .bolt { stroke-width: 1.5; }
.num { font-size: 12px; fill: #2a86c8; text-anchor: middle; }
.lang { font-size: 24px; font-weight: 700; fill: #2a86c8; text-anchor: middle; }
.fields { position: relative; flex: 1; border-top: 1px solid #dcdad8; padding: 10px 9px 0 6px; }
.fields h4 { line-height: 32px; padding-left: 12px; }
.fields .strong { font-weight: 600; color: #484644; margin-top: 12px; }
.drop { display: block; width: 100%; height: 42px; margin-top: 3px; text-align: left; padding-left: 15px; background: #fff; border: 1px dashed #c8c6c4; border-radius: 3px; }
.switch { display: flex; align-items: center; height: 40px; padding: 0 24px 0 12px; position: relative; }
.strong + .switch { margin-top: 2px; }
.switch input { position: absolute; opacity: 0; right: 40px; }
.pill { margin-left: auto; width: 48px; height: 25px; border: 1px solid #797775; border-radius: 13px; background: #fff; display: flex; align-items: center; gap: 4px; padding: 0 5px 0 6px; font-size: 13px; color: #605e5c; }
.pill::before { content: ""; width: 12px; height: 12px; border-radius: 50%; background: #605e5c; }
.pill::after { content: "Off"; }
input:checked + .pill { background: #117865; border-color: #117865; color: #fff; flex-direction: row-reverse; justify-content: flex-start; }
input:checked + .pill::before { background: #fff; }
input:checked + .pill::after { content: "On"; }
.thumb { position: absolute; right: 0; top: 4px; width: 9px; height: 171px; border-radius: 5px; background: #d2d0ce; }

/* Data */
.data-pane { border-left: 1px solid #d2d0ce; padding-left: 6px; }
.data-pane header { padding: 0 9px 0 6px; }
.data-pane .find { height: 36px; margin: 9px 5px 0 0; padding: 1px 0 0 18px; gap: 10px; font-size: 19px; color: #707070; background: #fff; border: 1px solid #d2d0ce; border-bottom-color: #605e5c; border-radius: 5px; }
.table-row { display: flex; align-items: center; height: 64px; padding-left: 17px; }
.table-row svg + svg { margin: 0 9px 0 10px; }

/* Status bar */
.status { height: 34px; border-top: 1px solid #d2d0ce; display: flex; align-items: center; justify-content: space-between; padding: 3px 5px 0 6px; color: #444; }
.zoom { display: flex; align-items: center; }
.zoom input { -webkit-appearance: none; appearance: none; width: 150px; height: 16px; margin: 0 9px 0 8px; background: linear-gradient(#605e5c, #605e5c) center / 100% 1px no-repeat, linear-gradient(#605e5c, #605e5c) center / 2px 7px no-repeat; }
.zoom input::-webkit-slider-thumb { -webkit-appearance: none; width: 6px; height: 16px; background: #444; }
.pct { margin: 0 28px 0 20px; }
.zoom a { margin-left: 21px; }
```
